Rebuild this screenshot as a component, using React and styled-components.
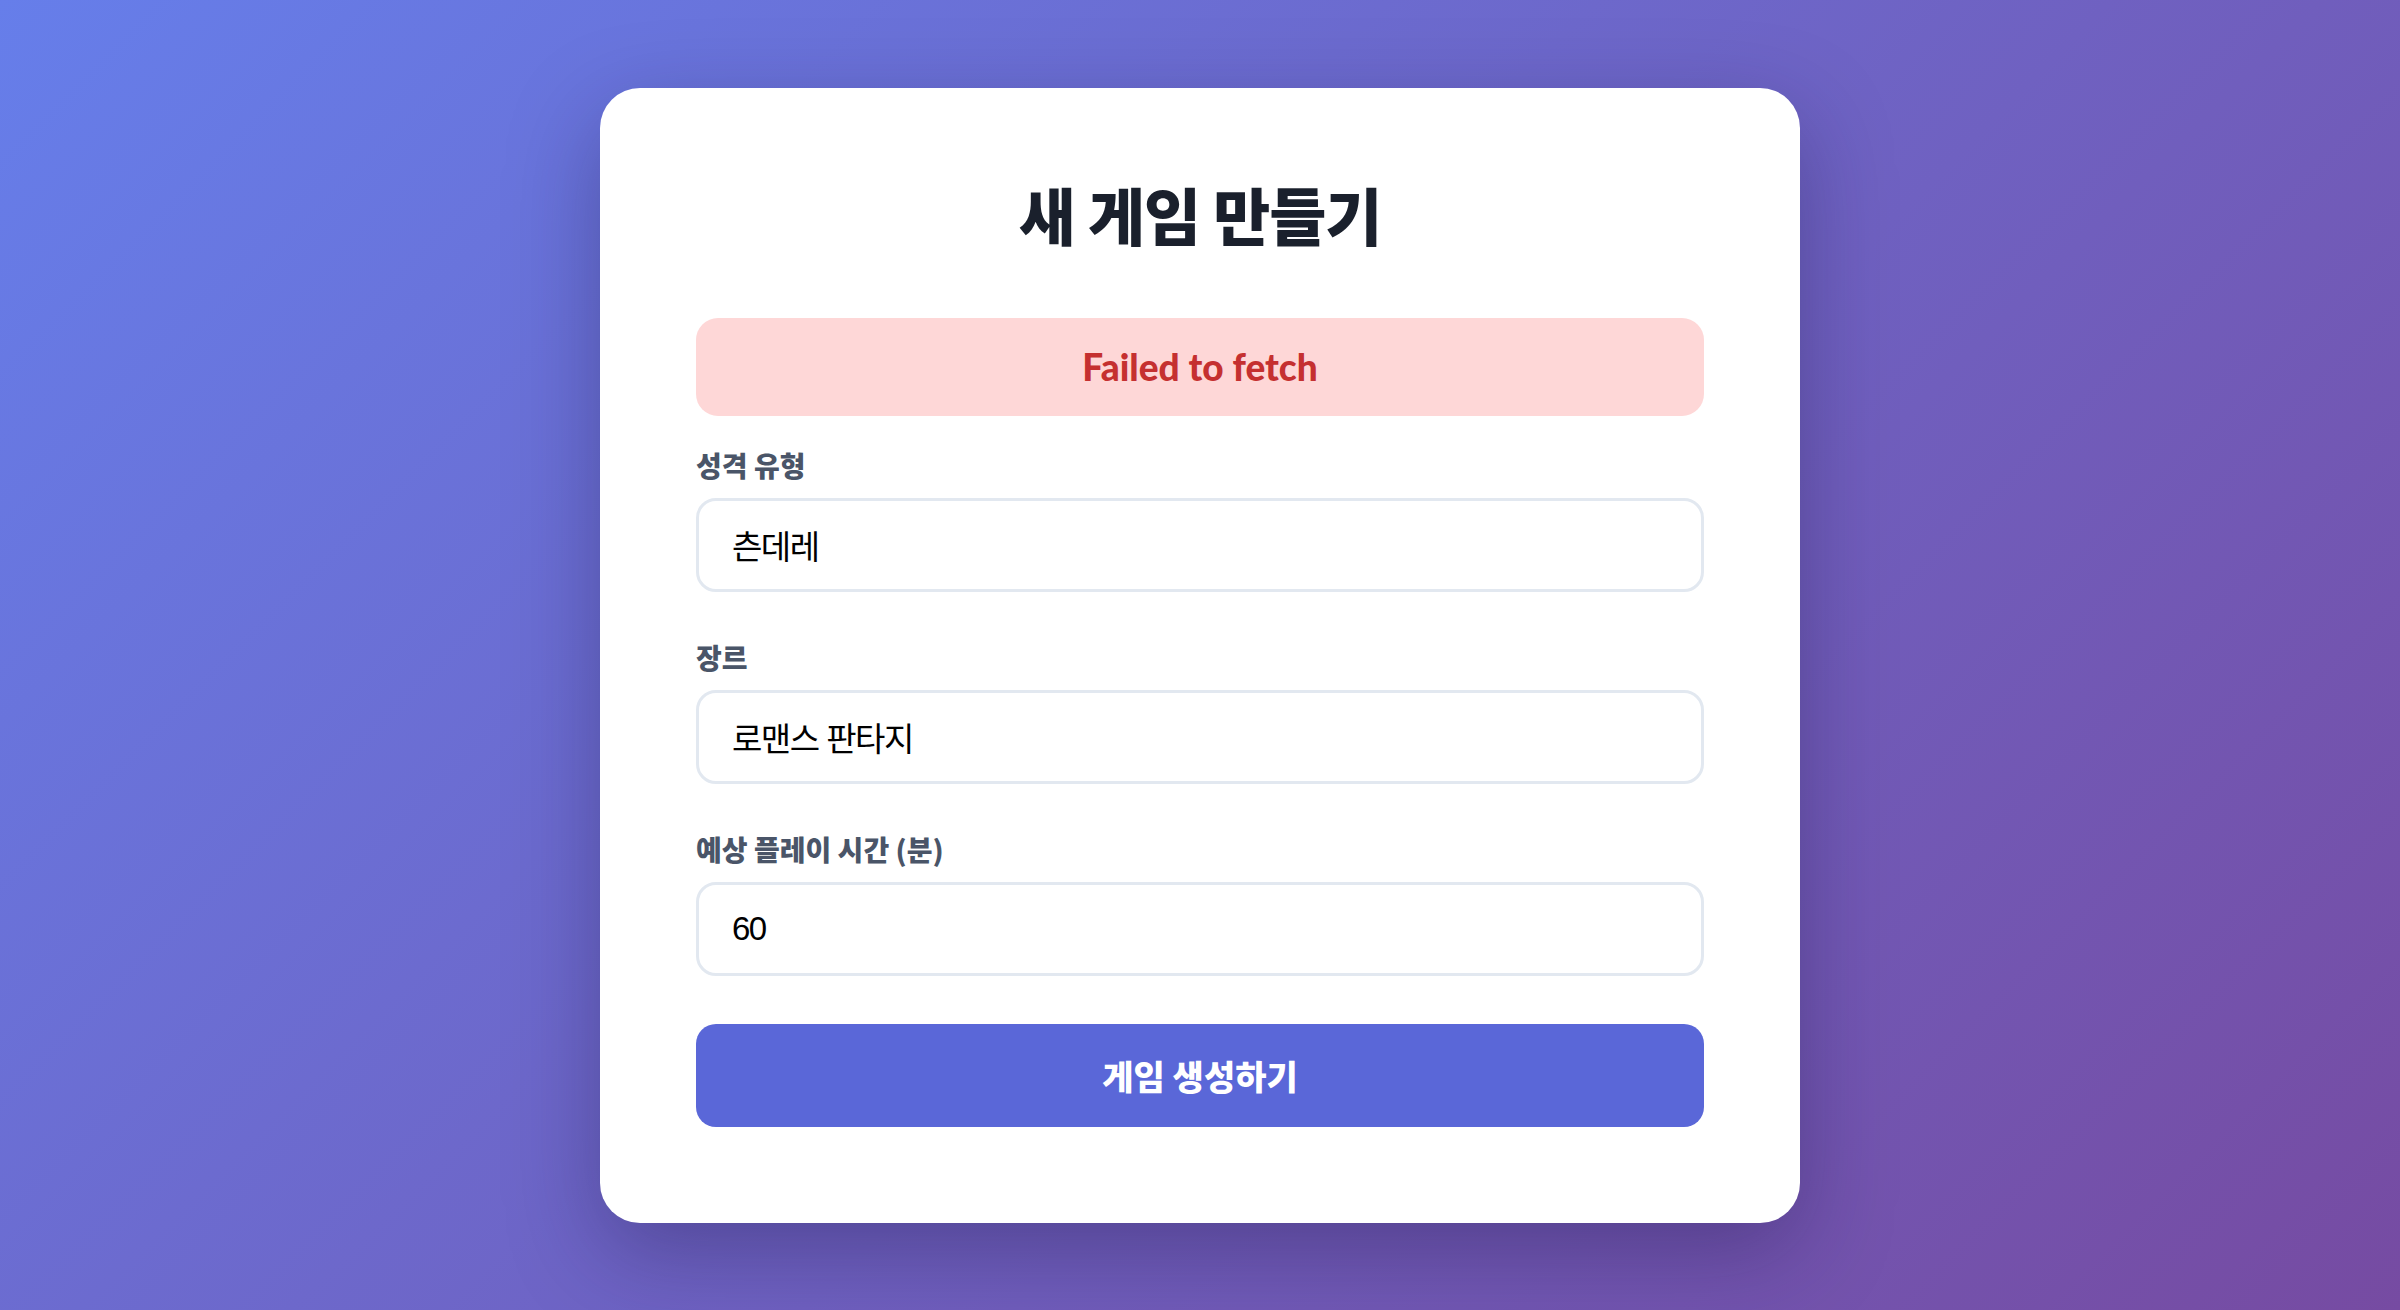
import React from "react";
import styled, { createGlobalStyle } from "styled-components";

const GlobalStyle = createGlobalStyle`
  * {
    box-sizing: border-box;
  }
  body {
    margin: 0;
    font-family: "Noto Sans CJK KR", "Noto Sans", sans-serif;
  }
`;

const Page = styled.div`
  min-height: 100vh;
  display: flex;
  align-items: center;
  justify-content: center;
  background: linear-gradient(135deg, #667eea 0%, #764ba2 100%);
`;

const Card = styled.div`
  width: 1200px;
  padding: 96px;
  background: #ffffff;
  border-radius: 40px;
  box-shadow: 0 30px 90px rgba(30, 20, 70, 0.35);
`;

const Title = styled.h1`
  margin: 0 0 74px;
  font-family: "Noto Sans CJK KR", sans-serif;
  font-size: 62px;
  line-height: 60px;
  font-weight: 900;
  color: #1a202c;
  text-align: center;
  letter-spacing: -1px;
`;

const ErrorBox = styled.div`
  height: 98px;
  margin-bottom: 32px;
  display: flex;
  align-items: center;
  justify-content: center;
  background: #fed7d7;
  border-radius: 22px;
  color: #c53030;
  font-family: "Lato", "Noto Sans CJK KR", sans-serif;
  font-size: 37px;
  font-weight: 900;
`;

const Field = styled.div`
  display: flex;
  flex-direction: column;
  gap: 16px;
  margin-bottom: 48px;
`;

const Label = styled.label`
  font-family: "Noto Sans CJK KR", sans-serif;
  font-size: 28px;
  line-height: 34px;
  font-weight: 900;
  color: #4a5568;
`;

const Input = styled.input`
  width: 100%;
  height: 94px;
  padding: 0 33px;
  border: 3px solid #e2e8f0;
  border-radius: 20px;
  background: #ffffff;
  font-family: "Liberation Sans", "Noto Sans CJK KR", sans-serif;
  font-size: 33px;
  letter-spacing: -1.5px;
  color: #000000;
  outline: none;
`;

const SubmitButton = styled.button`
  width: 100%;
  height: 103px;
  border: none;
  border-radius: 20px;
  background: #5a67d8;
  color: #ffffff;
  font-family: "Noto Sans CJK KR", sans-serif;
  font-size: 34px;
  font-weight: 900;
  cursor: pointer;
`;

const fields = [
  { id: "personality", label: "성격 유형", value: "츤데레" },
  { id: "genre", label: "장르", value: "로맨스 판타지" },
  { id: "time", label: "예상 플레이 시간 (분)", value: "60", type: "number" },
];

export default function App() {
  return (
    <>
      <GlobalStyle />
      <Page>
        <Card>
          <Title>새 게임 만들기</Title>
          <ErrorBox>Failed to fetch</ErrorBox>
          {fields.map((f) => (
            <Field key={f.id}>
              <Label htmlFor={f.id}>{f.label}</Label>
              <Input id={f.id} type={f.type || "text"} defaultValue={f.value} />
            </Field>
          ))}
          <SubmitButton>게임 생성하기</SubmitButton>
        </Card>
      </Page>
    </>
  );
}
